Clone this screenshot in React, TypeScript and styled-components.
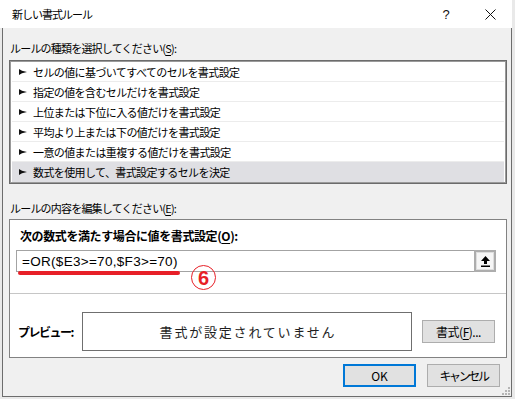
import React from 'react'
import styled, { createGlobalStyle } from 'styled-components'

const red = '#e71f27'

const rules = [
  'セルの値に基づいてすべてのセルを書式設定',
  '指定の値を含むセルだけを書式設定',
  '上位または下位に入る値だけを書式設定',
  '平均より上または下の値だけを書式設定',
  '一意の値または重複する値だけを書式設定',
  '数式を使用して、書式設定するセルを決定',
]

const GlobalStyle = createGlobalStyle`
  html, body {
    margin: 0;
    padding: 0;
  }
  body {
    width: 515px;
    height: 399px;
    overflow: hidden;
    background: #e9e9e9;
    color: #000;
    font-family: 'Noto Sans CJK JP', 'Noto Sans', sans-serif;
  }
`

const Dialog = styled.div`
  width: 512px;
  height: 397px;
  display: flex;
  flex-direction: column;
`

const TitleBar = styled.div`
  height: 28px;
  flex: none;
  display: flex;
  align-items: center;
  background: #fff;
  padding-left: 12px;
`

const Title = styled.span`
  font-size: 11px;
  letter-spacing: -1px;
  line-height: 16px;
`

const TitleButtons = styled.div`
  margin-left: auto;
  display: flex;
  height: 100%;
`

const TitleButton = styled.div`
  width: 44px;
  height: 100%;
  display: flex;
  align-items: center;
  justify-content: center;
  font-family: 'Liberation Sans', sans-serif;
  font-size: 13px;
  color: #111;
`

const Body = styled.div`
  position: relative;
  flex: 1;
  margin-left: 2px;
  border: 1px solid #6d6d6d;
  border-top: none;
  background: #f0f0f0;
  padding: 12px 4px 0 6px;
  display: flex;
  flex-direction: column;
`

const FieldLabel = styled.div<{ $gap: number }>`
  font-size: 11px;
  letter-spacing: -0.8px;
  line-height: 16px;
  margin-bottom: ${(p) => p.$gap}px;
  padding-left: 1px;
`

const Key = styled.span`
  text-decoration: underline;
  text-underline-offset: 2px;
`

const RuleList = styled.div`
  border: 1px solid #6b6b6b;
  box-shadow: inset 0 0 0 1px #9a9a9a;
  background: #fff;
  padding: 1px;
  margin-bottom: 16px;
`

const RuleItem = styled.div<{ $selected?: boolean }>`
  height: 20px;
  box-sizing: border-box;
  margin: 0 1px;
  display: flex;
  align-items: center;
  gap: 6px;
  padding-left: 7px;
  background: ${(p) => (p.$selected ? '#dfdfe3' : 'transparent')};
  border-bottom: 1px solid ${(p) => (p.$selected ? 'transparent' : '#ececec')};
`

const RuleText = styled.span`
  font-size: 11px;
  letter-spacing: -0.6px;
  line-height: 16px;
`

const GroupBox = styled.div`
  border: 1px solid #828282;
  background: #fff;
  display: flex;
  flex-direction: column;
`

const GroupTitle = styled.div`
  margin: 8px 0 0 10px;
  font-size: 12px;
  font-weight: 700;
  letter-spacing: -0.4px;
  line-height: 16px;
`

const FormulaRow = styled.div`
  position: relative;
  margin: 6px 10px 0 6px;
  height: 22px;
  display: flex;
`

const FormulaInput = styled.div`
  flex: 1;
  border: 1px solid #a3a3a3;
  border-right: none;
  display: flex;
  align-items: center;
  padding-left: 5px;
  font-family: 'Liberation Sans', Arial, sans-serif;
  font-size: 13.5px;
  letter-spacing: 0.3px;
`

const CollapseButton = styled.div`
  width: 22px;
  box-sizing: border-box;
  border: 2px solid #adadad;
  background: #f6f6f6;
  box-shadow: inset 0 0 0 1px #dedede;
  display: flex;
  align-items: center;
  justify-content: center;
`

const MarkLine = styled.div`
  position: absolute;
  left: 2px;
  top: 21px;
  width: 162px;
  height: 4px;
  border-radius: 2px;
  background: ${red};
`

const MarkNumber = styled.div`
  position: absolute;
  left: 175px;
  top: 15px;
  width: 25px;
  height: 25px;
  box-sizing: border-box;
  border: 1.5px solid ${red};
  border-radius: 50%;
  display: flex;
  align-items: center;
  justify-content: center;
  color: ${red};
  font-family: 'Liberation Sans', Arial, sans-serif;
  font-weight: 700;
  font-size: 20px;
  line-height: 1;
`

const Divider = styled.div`
  margin-top: 21px;
  height: 1px;
  background: #c6c6c6;
`

const PreviewRow = styled.div`
  display: flex;
  align-items: center;
  padding: 18px 11px 6px 8px;
`

const PreviewLabel = styled.div`
  width: 64px;
  font-size: 12px;
  font-weight: 700;
  letter-spacing: -1.5px;
`

const PreviewBox = styled.div`
  width: 330px;
  height: 39px;
  box-sizing: border-box;
  border: 1px solid #6f6f6f;
  display: flex;
  align-items: center;
  justify-content: center;
  padding-left: 2px;
  font-size: 13px;
  letter-spacing: 1.8px;
  color: #1e1e1e;
`

const PushButton = styled.div<{ $primary?: boolean; $tight?: number }>`
  width: 73px;
  height: 23px;
  box-sizing: border-box;
  border: ${(p) => (p.$primary ? '2px solid #0078d7' : '1px solid #adadad')};
  background: #e1e1e1;
  display: flex;
  align-items: center;
  justify-content: center;
  font-size: 12px;
  letter-spacing: ${(p) => p.$tight ?? 0}px;
  margin-left: auto;
`

const Footer = styled.div`
  display: flex;
  justify-content: flex-end;
  gap: 11px;
  margin-top: 6px;
  padding-right: 7px;
`

const FooterButton = styled(PushButton)`
  margin-left: 0;
`

const Grip = styled.svg`
  position: absolute;
  right: 1px;
  bottom: 1px;
`

const Pointer = () => (
  <svg width="8" height="6" viewBox="0 0 8 6">
    <polygon points="0,0 3,1.8 8,3 3,4.2 0,6" fill="#111" />
  </svg>
)

const UpArrow = () => (
  <svg width="9" height="11" viewBox="0 0 9 11">
    <path d="M4.5 0 L9 5 L6 5 L6 8 L3 8 L3 5 L0 5 Z" fill="#000" />
    <rect x="0" y="9.5" width="9" height="1.5" fill="#000" />
  </svg>
)

const App: React.FC = () => (
  <>
    <GlobalStyle />
    <Dialog>
      <TitleBar>
        <Title>新しい書式ルール</Title>
        <TitleButtons>
          <TitleButton>?</TitleButton>
          <TitleButton>
            <svg width="11" height="11" viewBox="0 0 11 11">
              <path d="M0.5 0.5 L10.5 10.5 M10.5 0.5 L0.5 10.5" stroke="#111" strokeWidth="1" />
            </svg>
          </TitleButton>
        </TitleButtons>
      </TitleBar>
      <Body>
        <FieldLabel $gap={4}>
          ルールの種類を選択してください(<Key>S</Key>):
        </FieldLabel>
        <RuleList>
          {rules.map((rule, i) => (
            <RuleItem key={rule} $selected={i === rules.length - 1}>
              <Pointer />
              <RuleText>{rule}</RuleText>
            </RuleItem>
          ))}
        </RuleList>
        <FieldLabel $gap={3}>
          ルールの内容を編集してください(<Key>E</Key>):
        </FieldLabel>
        <GroupBox>
          <GroupTitle>
            次の数式を満たす場合に値を書式設定(<Key>O</Key>):
          </GroupTitle>
          <FormulaRow>
            <FormulaInput>=OR($E3&gt;=70,$F3&gt;=70)</FormulaInput>
            <CollapseButton>
              <UpArrow />
            </CollapseButton>
            <MarkLine />
            <MarkNumber>6</MarkNumber>
          </FormulaRow>
          <Divider />
          <PreviewRow>
            <PreviewLabel>プレビュー:</PreviewLabel>
            <PreviewBox>書式が設定されていません</PreviewBox>
            <PushButton $tight={-0.5}>
              書式(<Key>F</Key>)...
            </PushButton>
          </PreviewRow>
        </GroupBox>
        <Footer>
          <FooterButton $primary>OK</FooterButton>
          <FooterButton $tight={-2.4}>キャンセル</FooterButton>
        </Footer>
        <Grip width="9" height="9" viewBox="0 0 9 9">
          {[
            [7, 1],
            [4, 4],
            [7, 4],
            [1, 7],
            [4, 7],
            [7, 7],
          ].map(([x, y]) => (
            <rect key={`${x}-${y}`} x={x} y={y} width="2" height="2" fill="#b5b5b5" />
          ))}
        </Grip>
      </Body>
    </Dialog>
  </>
)

export default App
